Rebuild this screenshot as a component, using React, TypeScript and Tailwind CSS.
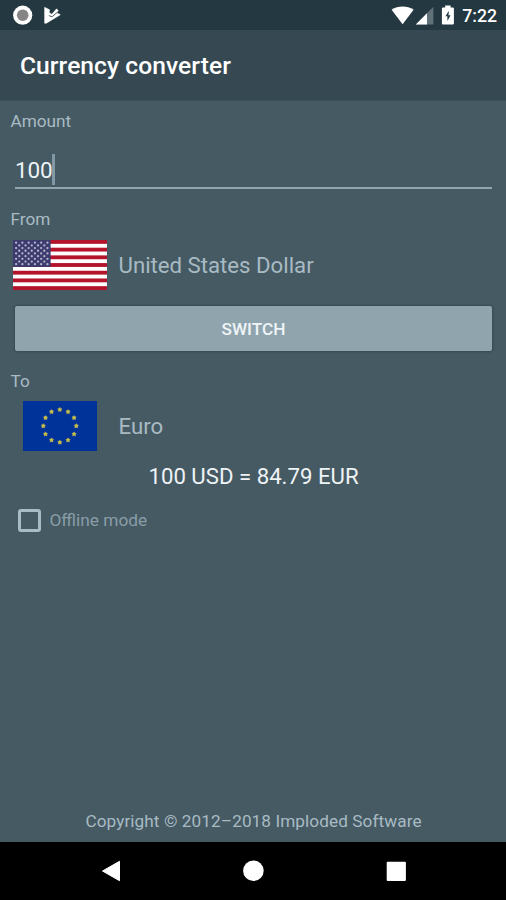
const STRIPES = [0, 2, 4, 6, 8, 10, 12];
const STAR_ROWS = [0, 1, 2, 3, 4, 5, 6, 7, 8];

function UsFlag() {
  return (
    <svg width="94" height="50" viewBox="0 0 94 50" className="block">
      <rect width="94" height="50" fill="#fff" />
      {STRIPES.map((i) => (
        <rect key={i} y={(i * 50) / 13} width="94" height={50 / 13} fill="#b3132b" />
      ))}
      <rect width="37.6" height={(50 * 7) / 13} fill="#3c3b6e" />
      {STAR_ROWS.map((r) =>
        Array.from({ length: r % 2 ? 5 : 6 }, (_, c) => (
          <circle
            key={`${r}-${c}`}
            cx={3.1 + c * 6.27 + (r % 2 ? 3.13 : 0)}
            cy={2.7 + r * 2.69}
            r="1.15"
            fill="#b5b4ce"
          />
        ))
      )}
    </svg>
  );
}

function EuFlag() {
  return (
    <svg width="74" height="50" viewBox="0 0 74 50" className="block">
      <rect width="74" height="50" fill="#003399" />
      {Array.from({ length: 12 }, (_, i) => {
        const a = (i * Math.PI) / 6;
        return (
          <path
            key={i}
            transform={`translate(${36.8 + 16.5 * Math.sin(a)} ${24.9 - 16.4 * Math.cos(a)})`}
            d="M0-2.3.9-1.1 2.2-.8 1.4.4 1.5 2 0 1.5-1.5 2-1.4.4-2.2-.8-.9-1.1Z"
            fill="#c9bd4c"
            stroke="#c9bd4c"
            strokeWidth=".3"
          />
        );
      })}
    </svg>
  );
}

function StatusBar() {
  return (
    <div className="flex h-[30px] items-center justify-between bg-[#233840] pr-[9px] pl-[12px] text-white">
      <svg width="52" height="30" viewBox="0 0 52 30">
        <circle cx="10.7" cy="15.2" r="9.6" fill="#fff" />
        <circle cx="10.7" cy="15.2" r="5.8" fill="#858585" />
        <path d="M32.6 7.3 37.6 9.8 37.2 12.6 39.8 14.2 44.6 8.8 46.2 10.6 44.8 13 48.4 14.7 34.4 23.2 32.6 23.2Z" fill="#fff" stroke="#fff" strokeWidth=".5" strokeLinejoin="round" />
        <path d="M36.8 15.6 40 16.8 45.6 12" fill="none" stroke="#233840" strokeWidth=".8" />
      </svg>
      <div className="flex items-center">
        <svg width="70" height="30" viewBox="0 0 70 30">
          <path d="M.6 9.7C7 5.4 16.2 5.4 22.6 9.7L11.6 24.2Z" fill="#fff" />
          <path d="M24.8 24.4 42.4 6.8V24.4Z" fill="#617178" />
          <path d="M24.8 24.4 36 13.2V24.4Z" fill="#fff" />
          <path d="M52 7.4H54.2V5.4H59.6V7.4H61.8Q62.9 7.4 62.9 8.5V23.5Q62.9 24.6 61.8 24.6H52Q50.9 24.6 50.9 23.5V8.5Q50.9 7.4 52 7.4Z" fill="#fff" />
          <path d="M57.9 10.8 54.4 16.2H56.4V21L59.6 15.3H57.5Z" fill="#233840" />
        </svg>
        <span className="w-[36px] pt-px text-right text-[17.7px] leading-[30px] font-medium whitespace-nowrap">7:22</span>
      </div>
    </div>
  );
}

export default function App() {
  return (
    <div className="flex h-[900px] w-[506px] flex-col overflow-hidden bg-[#455a63] font-[Roboto,sans-serif] text-[17.2px] text-[#a9bac3]">
      <StatusBar />
      <header className="flex h-[71px] items-center border-b border-[#3e525c] bg-[#364852] pt-[2px] pl-[20px] text-[24.6px] font-medium text-white">
        <h1 className="tracking-[0.06px]">Currency converter</h1>
      </header>

      <main className="flex flex-1 flex-col">
        <label className="flex h-[40px] items-center pt-[2px] pl-[10.5px]">Amount</label>
        <div className="mx-[15px] flex h-[48px] w-[477px] items-center border-b-2 border-[#90a7b1] pt-[10px] text-[22.5px] text-[#eef3f6]">
          <span className="pt-[3px] tracking-[-0.2px]">100</span>
          <span className="h-[31px] w-[2.5px] bg-[#8099a4]" />
        </div>

        <label className="mt-[11px] flex h-[40px] items-center pl-[10.5px]">From</label>
        <div className="flex h-[50px] items-center pl-[12.5px] text-[22.2px]">
          <UsFlag />
          <span className="ml-[12px] pt-[2px]">United States Dollar</span>
        </div>

        <button className="mr-[14px] ml-[15px] mt-[16px] flex h-[45px] items-center justify-center rounded-[2px] bg-[#90a4ae] pt-[2px] text-[17.2px] font-medium text-[#eff4f7] shadow-[0_0_2px_1px_rgba(35,52,61,0.4)]">
          SWITCH
        </button>

        <label className="mt-[10px] flex h-[40px] items-center pt-px pl-[10.5px]">To</label>
        <div className="flex h-[50px] items-center pl-[23px] text-[22.2px]">
          <EuFlag />
          <span className="ml-[21.5px] pt-[2px]">Euro</span>
        </div>

        <p className="flex h-[50px] items-center justify-center pt-[2px] pl-px text-[22.2px] text-[#eef3f6]">
          100 USD = 84.79 EUR
        </p>

        <div className="mt-[1px] flex h-[37px] items-center pl-[18.4px] text-[#8a9da7]">
          <span className="h-[23px] w-[23px] rounded-[3px] border-3 border-[#a9bcc6]" />
          <span className="ml-[8px] text-[17.3px]">Offline mode</span>
        </div>

        <footer className="mt-auto mb-[8px] flex h-[26px] items-center justify-center pt-[2px] pl-px tracking-[0.08px] text-[#a9bac3]">
          Copyright © 2012–2018 Imploded Software
        </footer>
      </main>

      <nav className="flex h-[58px] items-center bg-black">
        <svg width="506" height="58" viewBox="0 0 506 58">
          <path d="M102.5 29 119.5 19.3V38.7Z" fill="#fff" stroke="#fff" strokeLinejoin="round" />
          <circle cx="253.4" cy="28.8" r="10.3" fill="#fff" />
          <rect x="386.7" y="19.8" width="19.2" height="19.2" rx="1" fill="#fff" />
        </svg>
      </nav>
    </div>
  );
}
